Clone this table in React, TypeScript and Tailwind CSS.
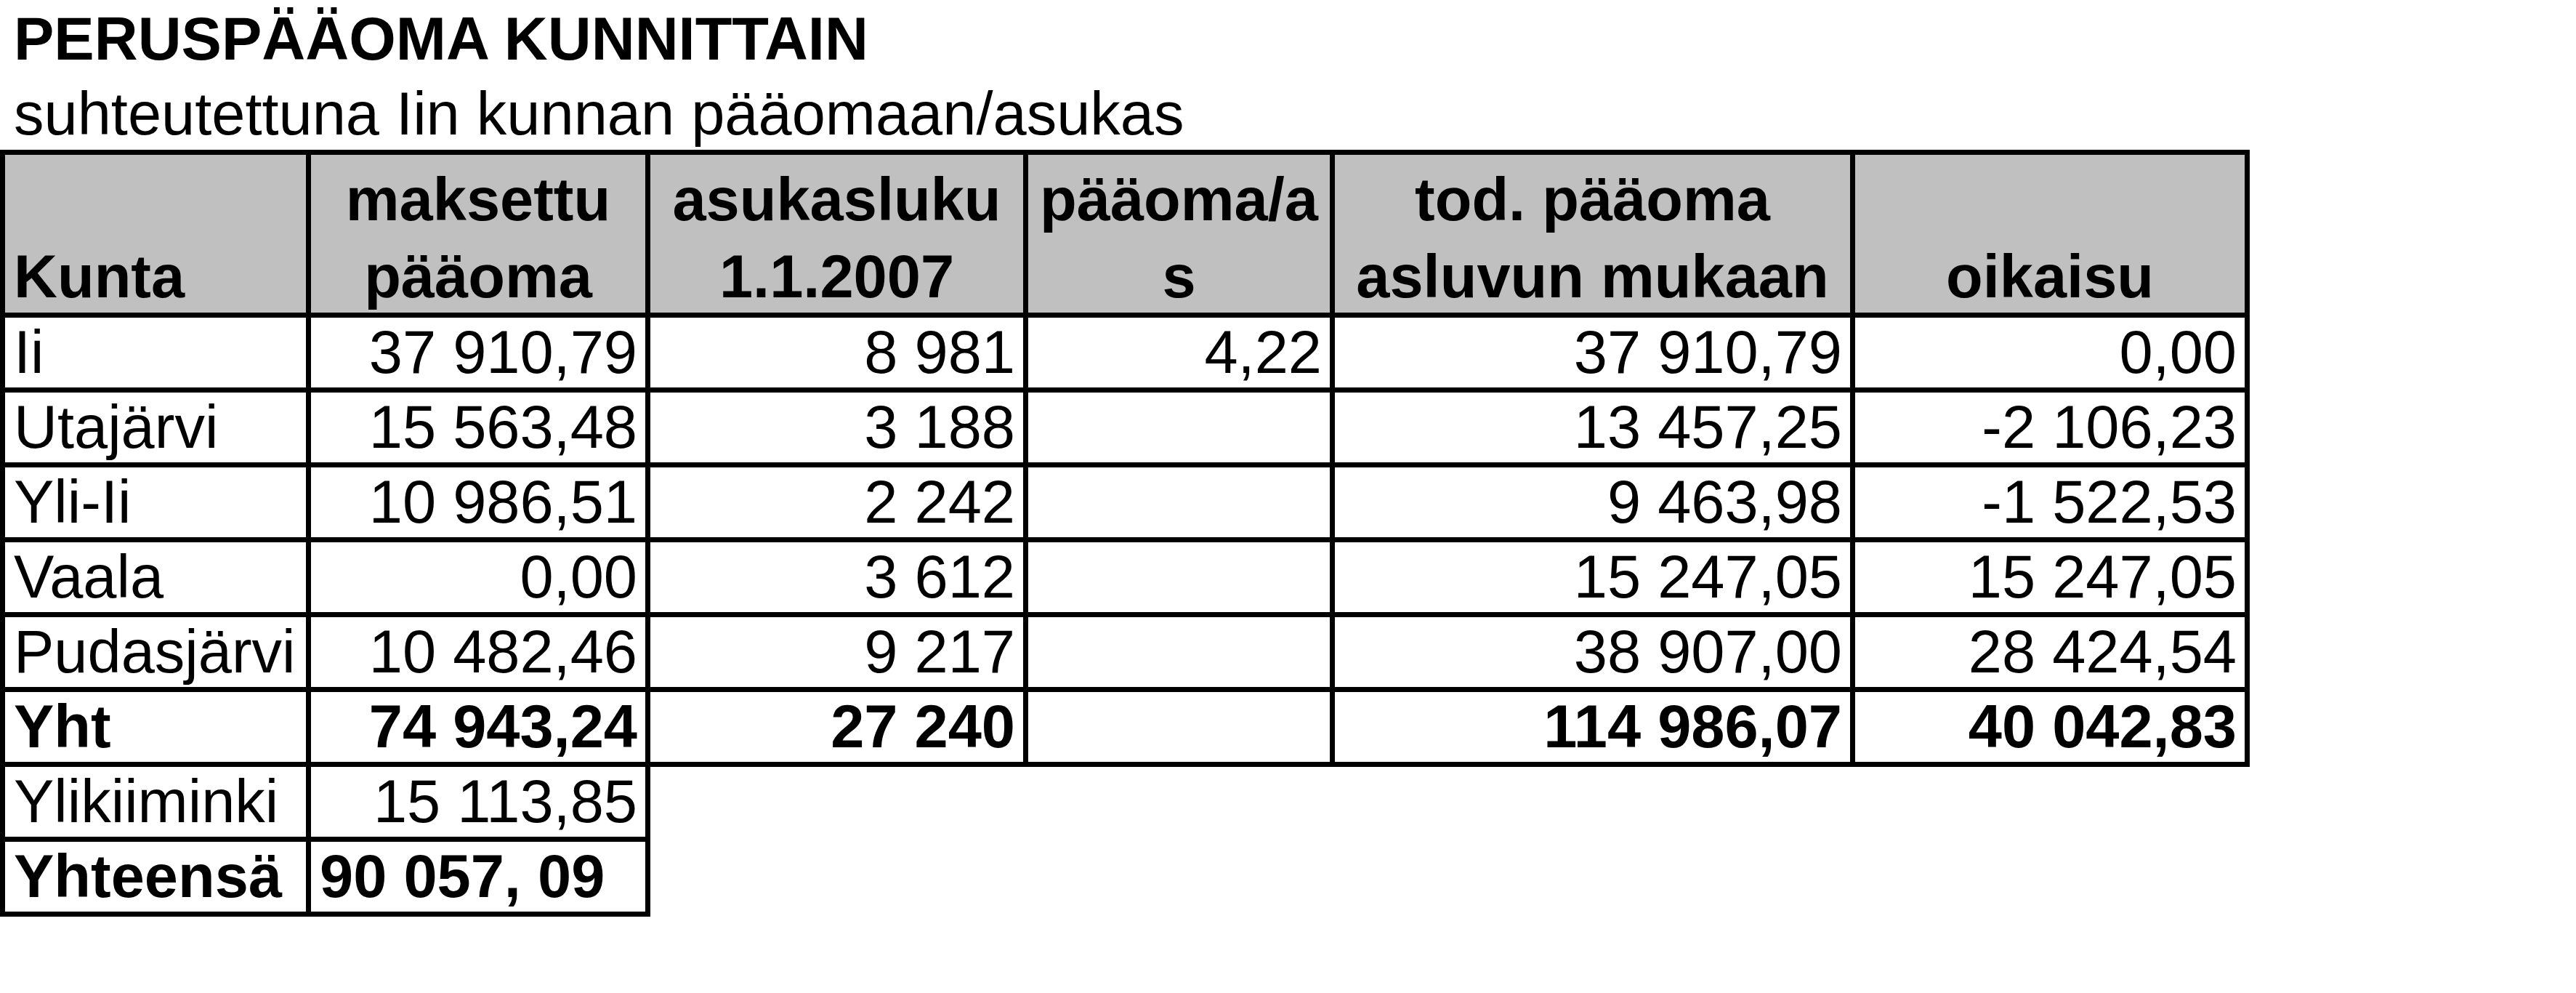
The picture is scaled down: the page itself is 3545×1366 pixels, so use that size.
import React from "react";

type Row = { name: string; cells: string[]; bold?: boolean };

const rows: Row[] = [
  { name: "Ii", cells: ["37 910,79", "8 981", "4,22", "37 910,79", "0,00"] },
  { name: "Utajärvi", cells: ["15 563,48", "3 188", "", "13 457,25", "-2 106,23"] },
  { name: "Yli-Ii", cells: ["10 986,51", "2 242", "", "9 463,98", "-1 522,53"] },
  { name: "Vaala", cells: ["0,00", "3 612", "", "15 247,05", "15 247,05"] },
  { name: "Pudasjärvi", cells: ["10 482,46", "9 217", "", "38 907,00", "28 424,54"] },
  { name: "Yht", cells: ["74 943,24", "27 240", "", "114 986,07", "40 042,83"], bold: true },
];

const headers: { lines: string[]; align: "left" | "center" }[] = [
  { lines: ["Kunta"], align: "left" },
  { lines: ["maksettu", "pääoma"], align: "center" },
  { lines: ["asukasluku", "1.1.2007"], align: "center" },
  { lines: ["pääoma/a", "s"], align: "center" },
  { lines: ["tod. pääoma", "asluvun mukaan"], align: "center" },
  { lines: ["oikaisu"], align: "center" },
];

function HeaderCell({ lines, align }: { lines: string[]; align: "left" | "center" }) {
  return (
    <div
      className={
        "bg-[#c0c0c0] h-[217px] flex flex-col justify-end gap-[23px] pb-[8px] font-bold text-[83px] leading-[83px] whitespace-nowrap overflow-hidden " +
        (align === "left" ? "items-start pl-[12px]" : "items-center")
      }
    >
      {lines.map((l, i) => (
        <div key={i}>{l}</div>
      ))}
    </div>
  );
}

function NameCell({ text, bold }: { text: string; bold?: boolean }) {
  return (
    <div
      className={
        "bg-white h-[96px] leading-[96px] text-[83px] pl-[12px] whitespace-nowrap overflow-hidden " +
        (bold ? "font-bold" : "font-normal")
      }
    >
      {text}
    </div>
  );
}

function NumCell({ text, bold }: { text: string; bold?: boolean }) {
  return (
    <div
      className={
        "bg-white h-[96px] leading-[96px] text-[83px] pr-[11px] text-right whitespace-nowrap overflow-hidden " +
        (bold ? "font-bold" : "font-normal")
      }
    >
      {text}
    </div>
  );
}

export default function App() {
  return (
    <div
      className="bg-white text-black min-h-[1366px] pt-[12px]"
      style={{ fontFamily: '"Liberation Sans", Arial, sans-serif' }}
    >
      <div className="pl-[19px] text-[83px] leading-[83px] font-bold whitespace-nowrap">
        PERUSPÄÄOMA KUNNITTAIN
      </div>
      <div className="pl-[19px] mt-[20px] text-[83px] leading-[83px] whitespace-nowrap">
        suhteutettuna Iin kunnan pääomaan/asukas
      </div>
      <div className="mt-[8px] w-max">
        <div className="grid grid-cols-[414px_460px_513px_415px_709px_536px] gap-[7px] bg-black p-[7px] w-max">
          {headers.map((h, i) => (
            <HeaderCell key={i} lines={h.lines} align={h.align} />
          ))}
          {rows.map((r) => (
            <React.Fragment key={r.name}>
              <NameCell text={r.name} bold={r.bold} />
              {r.cells.map((c, j) => (
                <NumCell key={j} text={c} bold={r.bold} />
              ))}
            </React.Fragment>
          ))}
        </div>
        <div className="grid grid-cols-[414px_460px] gap-[7px] bg-black px-[7px] pb-[7px] w-max">
          <NameCell text="Ylikiiminki" />
          <NumCell text="15 113,85" />
          <NameCell text="Yhteensä" bold />
          <div className="bg-white h-[96px] leading-[96px] text-[83px] pl-[12px] font-bold whitespace-nowrap overflow-hidden">
            90 057, 09
          </div>
        </div>
      </div>
    </div>
  );
}
